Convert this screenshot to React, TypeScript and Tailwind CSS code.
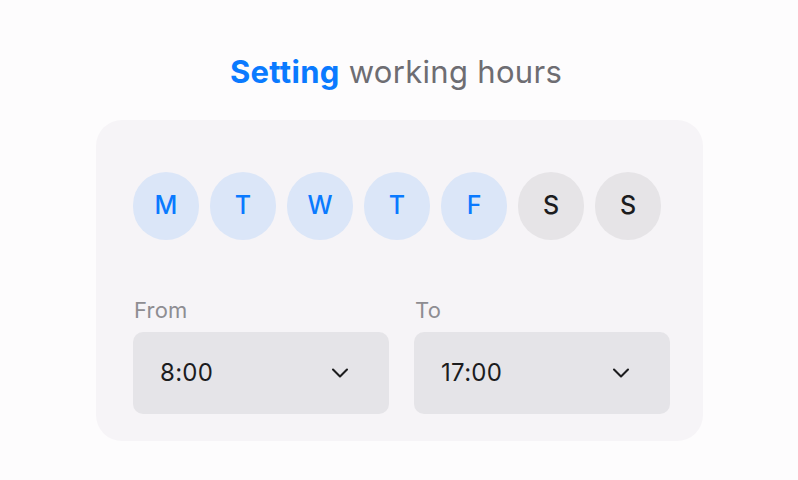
import { ChevronDown } from 'lucide-react';

const days = [
    { label: 'M', active: true },
    { label: 'T', active: true },
    { label: 'W', active: true },
    { label: 'T', active: true },
    { label: 'F', active: true },
    { label: 'S', active: false },
    { label: 'S', active: false },
];

function TimeSelect({ label, value }: { label: string; value: string }) {
    return (
        <div className="flex flex-col w-[256px]">
            <span className="text-[22px] leading-[26px] tracking-[0.2px] text-[#8e8d92] pl-[1px]">{label}</span>
            <div className="mt-[9px] h-[82px] rounded-[10px] bg-[#e5e4e8] flex items-center justify-between pl-[27px] pr-[35px]">
                <span className="text-[24px] tracking-[0.3px] text-[#1c1c1e]">{value}</span>
                <ChevronDown className="h-[28px] w-[28px] text-[#1c1c1e]" strokeWidth={1.8} />
            </div>
        </div>
    );
}

export default function App() {
    return (
        <div
            className="w-[798px] h-[480px] bg-[#fdfcfd] flex flex-col items-center"
            style={{ fontFamily: 'Inter, "Noto Sans", sans-serif' }}
        >
            <h1 className="mt-[51px] text-[31px] leading-[42px] tracking-[0.3px] text-[#6e6d72] mr-[6px]">
                <span className="font-bold text-[#0a7aff]">Setting</span> working hours
            </h1>

            <div className="mt-[27px] w-[607px] h-[321px] rounded-[26px] bg-[#f6f4f7] pl-[37px] pt-[52px] ml-[1px]">
                <div className="flex gap-[11px]">
                    {days.map((d, i) => (
                        <div
                            key={i}
                            className={`h-[68px] w-[66px] rounded-full flex items-center justify-center text-[25px] font-medium ${d.active ? 'bg-[#dbe6f8] text-[#0a7aff]' : 'bg-[#e6e4e7] text-[#1c1c1e]'}`}
                        >
                            {d.label}
                        </div>
                    ))}
                </div>

                <div className="mt-[57px] flex gap-[25px]">
                    <TimeSelect label="From" value="8:00" />
                    <TimeSelect label="To" value="17:00" />
                </div>
            </div>
        </div>
    );
}
